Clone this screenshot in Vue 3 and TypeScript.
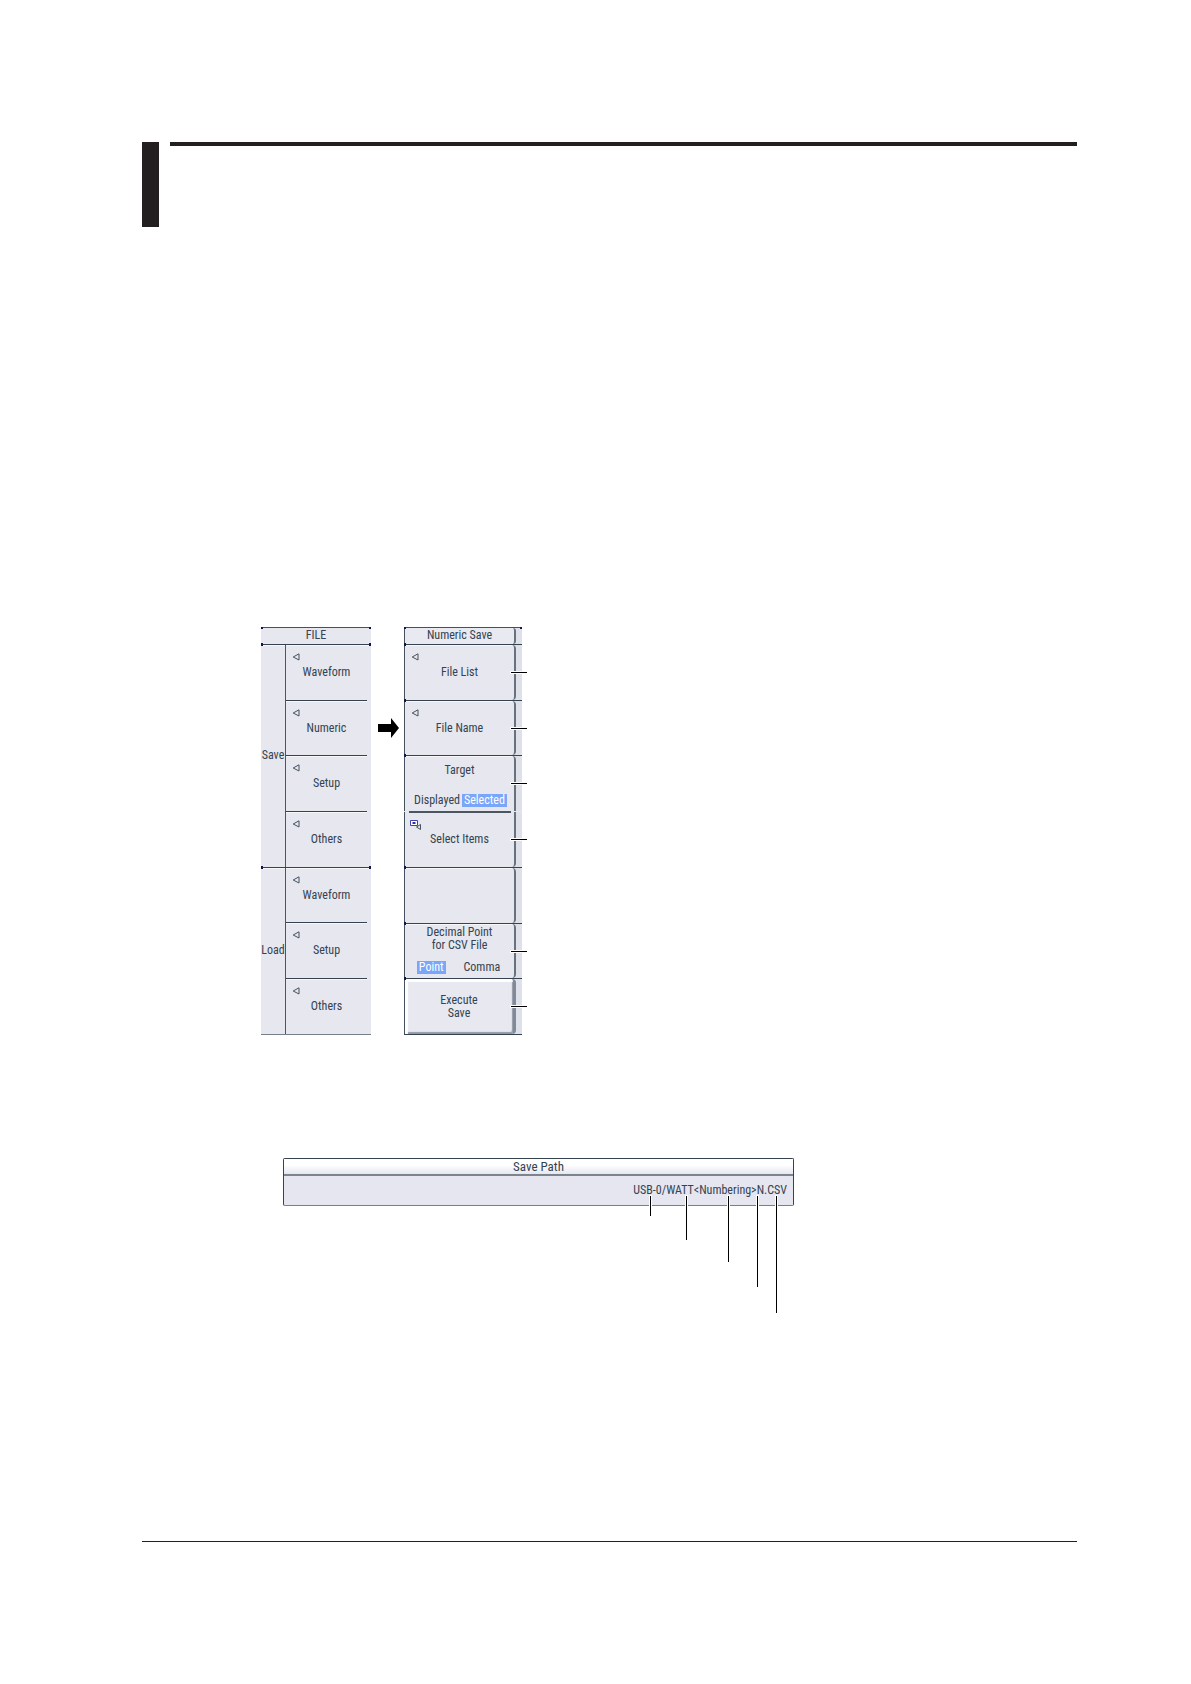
<script setup lang="ts">
import { ref } from 'vue'

interface MenuGroup {
  title: string
  items: string[]
}

const groups: MenuGroup[] = [
  { title: 'Save', items: ['Waveform', 'Numeric', 'Setup', 'Others'] },
  { title: 'Load', items: ['Waveform', 'Setup', 'Others'] },
]

const target = ref('Selected')
const decimalPoint = ref('Point')

const pathCallouts = [
  { right: 142, length: 20 },
  { right: 106, length: 44 },
  { right: 64, length: 66 },
  { right: 35, length: 91 },
  { right: 16, length: 117 },
]
</script>

<template>
  <div class="page">
    <header class="chapter">
      <div class="chapter-tab"></div>
      <div class="chapter-rule"></div>
    </header>

    <main>
      <div class="menus">
        <section class="file-menu">
          <h2 class="menu-title">FILE</h2>
          <div class="file-body">
            <div v-for="group in groups" :key="group.title" class="group" :class="group.title.toLowerCase()">
              <h3 class="group-title">{{ group.title }}</h3>
              <div class="group-items">
                <button v-for="item in group.items" :key="item" type="button" class="file-item">
                  <svg class="marker" viewBox="0 0 8 8"><path d="M7 .8V7L1.2 4Z" /></svg>
                  {{ item }}
                </button>
              </div>
            </div>
          </div>
        </section>

        <svg class="arrow" viewBox="0 0 21 20"><path d="M0 6H13V0L21 10L13 20V14H0Z" /></svg>

        <section class="numeric-menu">
          <h2 class="menu-title"><span class="numeric-title">Numeric Save</span></h2>
          <div class="numeric-body">
            <div class="soft-row">
              <button type="button" class="soft-key">
                <svg class="marker" viewBox="0 0 8 8"><path d="M7 .8V7L1.2 4Z" /></svg>
                File List
              </button>
              <i class="leader"></i>
            </div>
            <div class="soft-row">
              <button type="button" class="soft-key">
                <svg class="marker" viewBox="0 0 8 8"><path d="M7 .8V7L1.2 4Z" /></svg>
                File Name
              </button>
              <i class="leader"></i>
            </div>
            <div class="soft-row">
              <fieldset class="soft-key choice target">
                <legend>Target</legend>
                <div class="options">
                  <label v-for="option in ['Displayed', 'Selected']" :key="option" class="option">
                    <input v-model="target" type="radio" name="target" :value="option" />
                    <span>{{ option }}</span>
                  </label>
                </div>
              </fieldset>
              <i class="leader"></i>
            </div>
            <div class="soft-row joined">
              <button type="button" class="soft-key">
                <svg class="marker window-marker" viewBox="0 0 12 11">
                  <path class="window" d="M.5 .5H7.5V5.5H.5Z" />
                  <path class="window-fill" d="M2.5 2H5.5V4H2.5Z" />
                  <path d="M10.5 4.5V9.5L6.5 7Z" />
                </svg>
                Select Items
              </button>
              <i class="leader"></i>
            </div>
            <div class="soft-row"><div class="soft-key"></div></div>
            <div class="soft-row">
              <fieldset class="soft-key choice decimal">
                <legend>Decimal Point<br />for CSV File</legend>
                <div class="options">
                  <label v-for="option in ['Point', 'Comma']" :key="option" class="option">
                    <input v-model="decimalPoint" type="radio" name="decimal" :value="option" />
                    <span>{{ option }}</span>
                  </label>
                </div>
              </fieldset>
              <i class="leader"></i>
            </div>
            <div class="soft-row">
              <button type="button" class="soft-key execute">Execute<br />Save</button>
              <i class="leader"></i>
            </div>
          </div>
        </section>
      </div>

      <section class="save-path">
        <h2 class="path-title">Save Path</h2>
        <p class="path-value">USB-0/WATT&lt;Numbering&gt;N.CSV</p>
        <i
          v-for="callout in pathCallouts"
          :key="callout.right"
          class="path-leader"
          :style="{ right: callout.right + 'px', height: callout.length + 'px' }"
        ></i>
      </section>
    </main>

    <footer class="page-end"></footer>
  </div>
</template>

<style>
body {
  margin: 0;
  background: #fff;
}
</style>

<style scoped>
.page {
  box-sizing: border-box;
  padding: 142px 114px 142px 142px;
  font-family: "Liberation Sans Narrow", "Roboto Condensed", "Liberation Sans", sans-serif;
  font-size: 12px;
  line-height: 13px;
  color: #34434f;
}
.page *,
.page *::before,
.page *::after {
  box-sizing: border-box;
}
h2,
h3,
p {
  margin: 0;
  font-size: inherit;
  font-weight: normal;
}
button,
fieldset {
  min-width: 0;
  margin: 0;
  padding: 0;
  border: 0;
  background: none;
  color: inherit;
  font: inherit;
}
.chapter {
  display: flex;
  gap: 11px;
}
.chapter-tab {
  width: 17px;
  height: 85px;
  background: #231f20;
}
.chapter-rule {
  flex: 1;
  height: 4px;
  background: #231f20;
}
.menus {
  display: flex;
  align-items: flex-start;
  margin: 400px 0 0 119px;
}
.menu-title {
  position: relative;
  height: 17px;
  border-top: 1px solid #45525e;
  line-height: 15px;
  text-align: center;
}
.menu-title::before,
.menu-title::after,
.group::before,
.group::after,
.soft-row::before {
  content: "";
  position: absolute;
  z-index: 1;
  top: -2px;
  left: 0;
  width: 2px;
  height: 3px;
  background: #15154e;
}
.menu-title::before,
.menu-title::after {
  top: -1px;
  height: 2px;
}
.menu-title::after,
.group::after {
  right: 0;
  left: auto;
}
.file-menu {
  width: 110px;
  background: #e6e7ef;
}
.file-body {
  display: flex;
  flex-direction: column;
  height: 391px;
  border-bottom: 1px solid #77808a;
}
.group {
  position: relative;
  display: flex;
  border-top: 1px solid #34434f;
  box-shadow: inset 0 1px 0 #f8f8fb;
}
.save {
  flex: 4;
}
.load {
  flex: 3;
}
.group-title {
  display: flex;
  align-items: center;
  justify-content: center;
  width: 25px;
  border-right: 1px solid #4b5661;
}
.group-items {
  display: flex;
  flex: 1;
  flex-direction: column;
  padding-right: 4px;
}
.file-item {
  position: relative;
  flex: 1;
}
.file-item + .file-item {
  border-top: 1px solid #34434f;
  box-shadow: inset 0 1px 0 #f8f8fb;
}
.marker {
  position: absolute;
  top: 8px;
  left: 6px;
  width: 8px;
  height: 8px;
  fill: none;
  stroke: #46535e;
  stroke-width: 1;
}
.window-marker {
  left: 5px;
  width: 12px;
  height: 11px;
}
.window {
  fill: #fff;
  stroke: #4343ad;
}
.window-fill {
  fill: #3030a0;
  stroke: none;
}
.arrow {
  width: 21px;
  height: 20px;
  margin: 91px 5px 0 7px;
  fill: #000;
}
.numeric-menu {
  width: 118px;
  background: #dfe1ea;
}
.numeric-title {
  display: block;
  width: 112px;
  height: 16px;
  border-right: 2px solid #68727c;
  border-left: 1px solid #45525e;
  border-radius: 0 3px 3px 0;
  background: #e8e9f1;
}
.numeric-body {
  display: flex;
  flex-direction: column;
  height: 391px;
  border-bottom: 1px solid #34434f;
}
.soft-row {
  position: relative;
  display: flex;
  flex: 1;
  border-top: 1px solid #34434f;
}
.soft-key {
  position: relative;
  width: 112px;
  border-right: 2px solid #68727c;
  border-left: 1px solid #45525e;
  border-radius: 0 4px 4px 0;
  background: #e6e7ef;
  box-shadow: inset 0 1px 0 #f8f8fb;
}
.choice {
  display: flex;
  flex-direction: column;
  justify-content: space-between;
  text-align: center;
}
.choice legend {
  float: left;
  width: 100%;
  padding: 0;
}
.target {
  padding: 8px 0 4px;
  border-radius: 0 4px 0 0;
}
.joined {
  border-top-color: #e6e7ef;
}
.joined::before {
  top: -1px;
  right: 11px;
  left: 5px;
  width: auto;
  height: 2px;
  background: #4b5661;
}
.joined .soft-key {
  border-radius: 0 0 4px 0;
  box-shadow: none;
}
.decimal {
  padding: 2px 0 4px;
}
.options {
  display: flex;
  justify-content: center;
}
.option {
  position: relative;
}
.option input {
  position: absolute;
  inset: 0;
  margin: 0;
  opacity: 0;
}
.option span {
  display: block;
  padding: 0 2px;
}
.option input:checked + span {
  background: #79a5fb;
  color: #fff;
}
.decimal .options {
  gap: 16px;
}
.execute {
  border-right: 3px solid #828a97;
  background: #e8e9f0;
  box-shadow: inset 3px 3px 1px #fff, inset -1px -2px 1px #9298a5;
}
.leader {
  position: absolute;
  top: 27px;
  right: -5px;
  width: 16px;
  height: 1px;
  background: #000;
  box-shadow: 0 0 0 1px #fff;
}
.save-path {
  position: relative;
  width: 511px;
  margin: 123px 0 0 141px;
  border: 1px solid #34434f;
  border-bottom-color: #77808a;
  border-radius: 2px;
  background: #e5e6ef;
}
.path-title {
  height: 17px;
  border-bottom: 2px solid #7c848e;
  background: linear-gradient(#fff 40%, #e5e7f0);
  font-size: 13px;
  line-height: 15px;
  text-align: center;
}
.path-value {
  padding: 8px 6px;
  text-align: right;
}
.path-leader {
  position: absolute;
  top: 37px;
  width: 1px;
  background: #000;
  box-shadow: 0 0 0 1px #fff;
}
.page-end {
  margin-top: 335px;
  border-top: 1px solid #231f20;
}
</style>
